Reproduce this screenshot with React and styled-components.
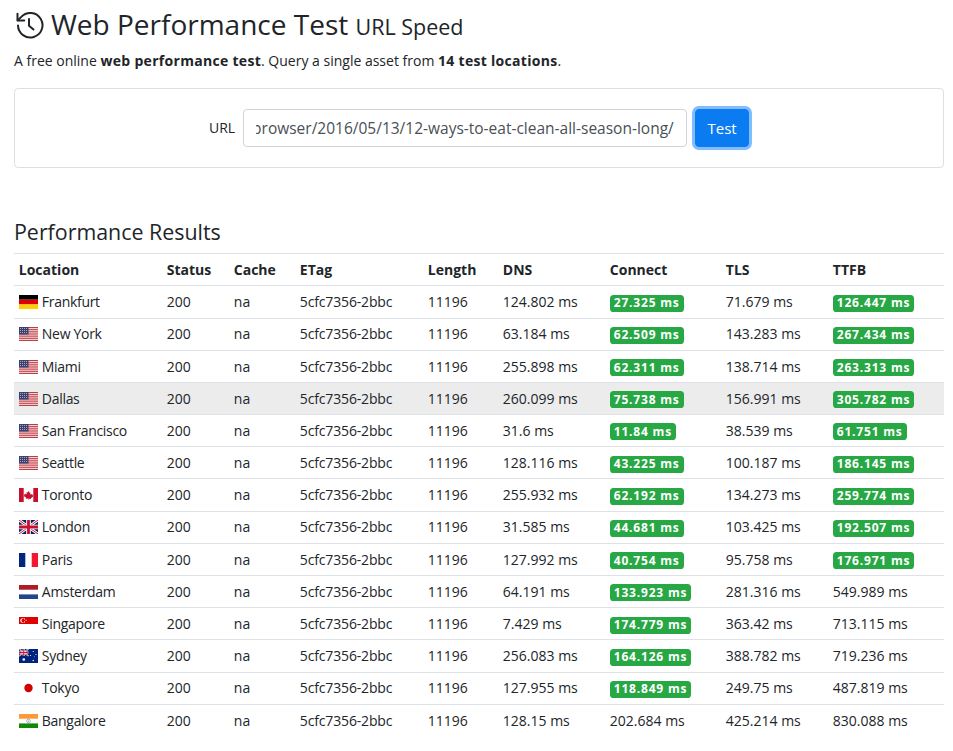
import { useEffect, useRef } from "react";
import styled, { createGlobalStyle } from "styled-components";

const URL_VALUE = "browser/2016/05/13/12-ways-to-eat-clean-all-season-long/";

const columns = [
  { name: "Location", width: 148 },
  { name: "Status", width: 67 },
  { name: "Cache", width: 66 },
  { name: "ETag", width: 128 },
  { name: "Length", width: 75 },
  { name: "DNS", width: 107 },
  { name: "Connect", width: 116 },
  { name: "TLS", width: 107 },
  { name: "TTFB", width: 116 },
];

const rows = [
  ["de", "Frankfurt", "124.802 ms", "27.325 ms", "71.679 ms", "126.447 ms", true],
  ["us", "New York", "63.184 ms", "62.509 ms", "143.283 ms", "267.434 ms", true],
  ["us", "Miami", "255.898 ms", "62.311 ms", "138.714 ms", "263.313 ms", true],
  ["us", "Dallas", "260.099 ms", "75.738 ms", "156.991 ms", "305.782 ms", true],
  ["us", "San Francisco", "31.6 ms", "11.84 ms", "38.539 ms", "61.751 ms", true],
  ["us", "Seattle", "128.116 ms", "43.225 ms", "100.187 ms", "186.145 ms", true],
  ["ca", "Toronto", "255.932 ms", "62.192 ms", "134.273 ms", "259.774 ms", true],
  ["gb", "London", "31.585 ms", "44.681 ms", "103.425 ms", "192.507 ms", true],
  ["fr", "Paris", "127.992 ms", "40.754 ms", "95.758 ms", "176.971 ms", true],
  ["nl", "Amsterdam", "64.191 ms", "133.923 ms", "281.316 ms", "549.989 ms", false],
  ["sg", "Singapore", "7.429 ms", "174.779 ms", "363.42 ms", "713.115 ms", false],
  ["au", "Sydney", "256.083 ms", "164.126 ms", "388.782 ms", "719.236 ms", false],
  ["jp", "Tokyo", "127.955 ms", "118.849 ms", "249.75 ms", "487.819 ms", false],
  ["in", "Bangalore", "128.15 ms", "202.684 ms", "425.214 ms", "830.088 ms", null],
];

const Global = createGlobalStyle`
  * { box-sizing: border-box; }
  body {
    margin: 0;
    background: #fff;
    color: #212529;
    font-family: "Open Sans", sans-serif;
    font-size: 14px;
    line-height: 21.6px;
  }
`;

const Page = styled.div`
  padding: 0 9px 0 14px;
`;

const Title = styled.h1`
  display: flex;
  align-items: center;
  gap: 7px;
  margin: 7px 0 7px;
  font-size: 28px;
  font-weight: 400;
  line-height: 1.2;
  height: 36px;
`;

const TitleSmall = styled.small`
  font-size: 21.5px;
`;

const Lead = styled.p`
  margin: 0 0 16px;

  b {
    letter-spacing: 0.3px;
  }
`;

const Card = styled.div`
  display: flex;
  justify-content: center;
  align-items: center;
  gap: 8px;
  height: 80px;
  margin-bottom: 51px;
  border: 1px solid rgba(0, 0, 0, 0.125);
  border-radius: 4px;
`;

const Label = styled.label`
  font-size: 14px;
`;

const UrlInput = styled.input`
  width: 444px;
  height: 38px;
  padding: 6px 12px;
  border: 1px solid #ced4da;
  border-radius: 4px;
  color: #495057;
  font-family: inherit;
  font-size: 15.5px;
  outline: none;
`;

const TestButton = styled.button`
  width: 54px;
  height: 38px;
  border: 1px solid #0a7bf0;
  border-radius: 4px;
  background: #0a7bf0;
  color: #fff;
  font-family: inherit;
  font-size: 15px;
  box-shadow: 0 0 0 3px rgba(0, 123, 255, 0.5);
`;

const SectionTitle = styled.h2`
  margin: 0 0 8.7px;
  font-size: 21.4px;
  font-weight: 400;
  line-height: 1.2;
`;

const Table = styled.table`
  width: 100%;
  table-layout: fixed;
  border-collapse: collapse;
`;

const Th = styled.th`
  padding: 4.9px 4.8px;
  border-top: 1px solid #dee2e6;
  border-bottom: 1px solid #dee2e6;
  text-align: left;
  font-weight: 700;
`;

const Td = styled.td`
  padding: 4.8px;
  border-top: 1px solid #dee2e6;
  white-space: nowrap;
`;

const Row = styled.tr`
  background: ${(p) => (p.$active ? "rgba(0, 0, 0, 0.075)" : "transparent")};
`;

const City = styled.span`
  letter-spacing: -0.3px;
`;

const Etag = styled.span`
  letter-spacing: -0.15px;
`;

const Badge = styled.span`
  display: inline-block;
  padding: 2.5px 4px;
  border-radius: 3.6px;
  background: #28a745;
  color: #fff;
  font-size: 12px;
  font-weight: 700;
  line-height: 12px;
  letter-spacing: 0.8px;
  vertical-align: baseline;
`;

const FlagBox = styled.svg`
  display: inline-block;
  width: 19px;
  height: 14px;
  margin-right: 0.4px;
  vertical-align: -2px;
`;

function HistoryIcon() {
  return (
    <svg width="30" height="30" viewBox="0 0 24 24" fill="none" stroke="#212529" strokeWidth="1.6" strokeLinecap="round" strokeLinejoin="round">
      <path d="M3.2 12.4a9.8 9.8 0 1 0 2.6-6.9L3 8.2" />
      <path d="M2.8 3v5.4h5.4" />
      <path d="M12 7.2v5.4l3.6 3" />
    </svg>
  );
}

function Stars() {
  return (
    <g fill="#fff" opacity="0.55">
      {[1, 3, 5, 7].map((x) =>
        [1, 3, 5].map((y) => <rect key={x + "-" + y} x={x} y={y} width="1" height="1" />)
      )}
    </g>
  );
}

const flags = {
  de: (
    <>
      <rect width="19" height="4.7" fill="#000" />
      <rect y="4.7" width="19" height="4.7" fill="#d00" />
      <rect y="9.4" width="19" height="4.6" fill="#ffce00" />
    </>
  ),
  us: (
    <>
      <rect width="19" height="14" fill="#f3dede" />
      {[0, 2.15, 4.3, 6.45, 8.6, 10.75, 12.9].map((y) => (
        <rect key={y} y={y} width="19" height="1.08" fill="#bd3d44" />
      ))}
      <rect width="9.5" height="7.5" fill="#3c3f70" />
      <Stars />
    </>
  ),
  ca: (
    <>
      <rect width="19" height="14" fill="#fff" />
      <rect width="4.7" height="14" fill="#c8102e" />
      <rect x="14.3" width="4.7" height="14" fill="#c8102e" />
      <path d="M9.5 3l1 1.8 1-.5-.4 2.4 1.3-.9.4 1 1.4-.2-.5 1.5.5.4-2.4 1.7.2.9-2.3-.3V12h-.4v-1.6l-2.3.3.2-.9-2.4-1.7.5-.4-.5-1.5 1.4.2.4-1 1.3.9-.4-2.4 1 .5z" fill="#c8102e" />
    </>
  ),
  gb: (
    <>
      <rect width="19" height="14" fill="#012169" />
      <path d="M0 0l19 14M19 0L0 14" stroke="#fff" strokeWidth="2.8" />
      <path d="M0 0l19 14M19 0L0 14" stroke="#c8102e" strokeWidth="1" />
      <path d="M9.5 0v14M0 7h19" stroke="#fff" strokeWidth="4.6" />
      <path d="M9.5 0v14M0 7h19" stroke="#c8102e" strokeWidth="2.8" />
    </>
  ),
  fr: (
    <>
      <rect width="19" height="14" fill="#fff" />
      <rect width="6.3" height="14" fill="#00267f" />
      <rect x="12.7" width="6.3" height="14" fill="#f31830" />
    </>
  ),
  nl: (
    <>
      <rect width="19" height="14" fill="#fff" />
      <rect width="19" height="4.7" fill="#ae1c28" />
      <rect y="9.4" width="19" height="4.6" fill="#21468b" />
    </>
  ),
  sg: (
    <>
      <rect width="19" height="7" fill="#df0000" />
      <rect y="7" width="19" height="7" fill="#fff" />
      <circle cx="3.6" cy="3.5" r="2.3" fill="#fff" />
      <circle cx="4.6" cy="3.5" r="2.1" fill="#df0000" />
      <g fill="#fff">
        <rect x="5" y="1.5" width="1" height="1" />
        <rect x="6.6" y="2.8" width="1" height="1" />
        <rect x="5" y="4.4" width="1" height="1" />
      </g>
    </>
  ),
  au: (
    <>
      <rect width="19" height="14" fill="#00247d" />
      <path d="M0 0l9.5 7M9.5 0L0 7" stroke="#fff" strokeWidth="1.4" />
      <path d="M0 0l9.5 7M9.5 0L0 7" stroke="#cf142b" strokeWidth="0.6" />
      <path d="M4.75 0v7M0 3.5h9.5" stroke="#fff" strokeWidth="2" />
      <path d="M4.75 0v7M0 3.5h9.5" stroke="#cf142b" strokeWidth="1.1" />
      <g fill="#fff">
        <circle cx="4.75" cy="10.5" r="1.3" />
        <circle cx="14.2" cy="2.5" r="0.6" />
        <circle cx="14.2" cy="11.5" r="0.7" />
        <circle cx="11.5" cy="6.5" r="0.6" />
        <circle cx="17" cy="5.5" r="0.6" />
        <circle cx="15.5" cy="7.8" r="0.4" />
      </g>
    </>
  ),
  jp: (
    <>
      <rect width="19" height="14" fill="#fff" />
      <circle cx="9.5" cy="7" r="4.2" fill="#d30000" />
    </>
  ),
  in: (
    <>
      <rect width="19" height="14" fill="#fff" />
      <rect width="19" height="4.7" fill="#f93" />
      <rect y="9.4" width="19" height="4.6" fill="#128807" />
      <circle cx="9.5" cy="7" r="1.8" fill="none" stroke="#008" strokeWidth="0.5" opacity="0.6" />
      <circle cx="9.5" cy="7" r="0.5" fill="#008" opacity="0.6" />
    </>
  ),
};

function Flag({ code }) {
  return <FlagBox viewBox="0 0 19 14">{flags[code]}</FlagBox>;
}

export default function App() {
  const inputRef = useRef(null);

  useEffect(() => {
    inputRef.current.scrollLeft = inputRef.current.scrollWidth;
  }, []);

  return (
    <Page>
      <Global />
      <Title>
        <HistoryIcon />
        <span>
          Web Performance Test <TitleSmall>URL Speed</TitleSmall>
        </span>
      </Title>
      <Lead>
        A free online <b>web performance test</b>. Query a single asset from <b>14 test locations</b>.
      </Lead>
      <Card>
        <Label htmlFor="url">URL</Label>
        <UrlInput id="url" ref={inputRef} defaultValue={URL_VALUE} />
        <TestButton>Test</TestButton>
      </Card>
      <SectionTitle>Performance Results</SectionTitle>
      <Table>
        <colgroup>
          {columns.map((col) => (
            <col key={col.name} width={col.width} />
          ))}
        </colgroup>
        <thead>
          <tr>
            {columns.map((col) => (
              <Th key={col.name}>{col.name}</Th>
            ))}
          </tr>
        </thead>
        <tbody>
          {rows.map(([code, city, dns, connect, tls, ttfb, fastTtfb]) => (
            <Row key={city} $active={city === "Dallas"}>
              <Td>
                <Flag code={code} /> <City>{city}</City>
              </Td>
              <Td>200</Td>
              <Td>na</Td>
              <Td>
                <Etag>5cfc7356-2bbc</Etag>
              </Td>
              <Td>11196</Td>
              <Td>{dns}</Td>
              <Td>{fastTtfb === null ? connect : <Badge>{connect}</Badge>}</Td>
              <Td>{tls}</Td>
              <Td>{fastTtfb ? <Badge>{ttfb}</Badge> : ttfb}</Td>
            </Row>
          ))}
        </tbody>
      </Table>
    </Page>
  );
}
